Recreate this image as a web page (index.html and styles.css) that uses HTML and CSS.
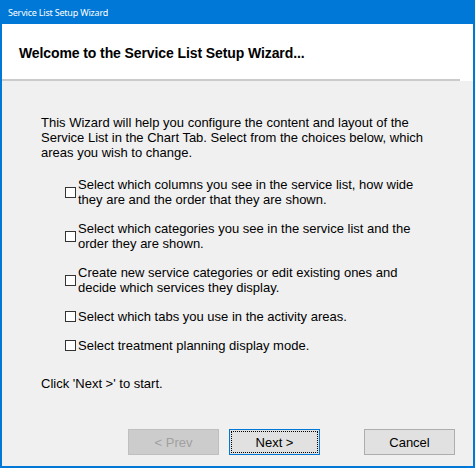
FILE: index.html
```html
<!DOCTYPE html>
<html>
<head>
<meta charset="utf-8">
<link rel="stylesheet" href="styles.css">
</head>
<body>
<div class="window">
  <div class="titlebar">Service List Setup Wizard</div>
  <div class="header">
    <h1 class="heading">Welcome to the Service List Setup Wizard...</h1>
  </div>
  <div class="separator"></div>
  <div class="content">
    <p class="intro">This Wizard will help you configure the content and layout of the<br>Service List in the Chart Tab. Select from the choices below, which<br>areas you wish to change.</p>
    <ul class="options">
      <li class="option"><span class="check"></span><span class="label">Select which columns you see in the service list, how wide<br>they are and the order that they are shown.</span></li>
      <li class="option"><span class="check"></span><span class="label">Select which categories you see in the service list and the<br>order they are shown.</span></li>
      <li class="option"><span class="check"></span><span class="label">Create new service categories or edit existing ones and<br>decide which services they display.</span></li>
      <li class="option"><span class="check"></span><span class="label">Select which tabs you use in the activity areas.</span></li>
      <li class="option"><span class="check"></span><span class="label">Select treatment planning display mode.</span></li>
    </ul>
    <p class="hint">Click 'Next &gt;' to start.</p>
    <div class="buttons">
      <button class="btn btn-disabled" disabled>&lt; Prev</button>
      <button class="btn btn-default">Next &gt;</button>
      <button class="btn btn-cancel">Cancel</button>
    </div>
  </div>
</div>
</body>
</html>
```

FILE: styles.css
```css
html, body {
  margin: 0;
  padding: 0;
}
body {
  width: 475px;
  height: 468px;
  overflow: hidden;
  font-family: "Liberation Sans", Arial, sans-serif;
}
.window {
  box-sizing: border-box;
  width: 475px;
  height: 468px;
  border: 2px solid #0078d7;
  border-top: 0;
  display: flex;
  flex-direction: column;
  background: #f0f0f0;
}
.titlebar {
  height: 24px;
  line-height: 25px;
  background: #0078d7;
  color: #ffffff;
  font-family: "Noto Sans", "Open Sans", sans-serif;
  font-size: 9px;
  letter-spacing: -0.2px;
  margin: 0 -2px 0 -2px;
  padding-left: 8px;
}
.header {
  box-sizing: border-box;
  height: 55px;
  background: #ffffff;
  padding: 21px 0 0 17px;
}
.heading {
  margin: 0;
  font-size: 14px;
  line-height: 16px;
  font-weight: bold;
  letter-spacing: -0.1px;
  color: #000;
}
.separator {
  height: 2px;
  background: linear-gradient(to right, #cbcbcb 0, #cbcbcb 458px, #ffffff 458px);
}
.content {
  flex: 1;
  display: flex;
  flex-direction: column;
  padding: 34px 0 11px 39px;
  font-size: 13px;
  line-height: 15px;
  color: #000;
}
.intro {
  margin: 0;
  white-space: nowrap;
}
.options {
  list-style: none;
  margin: 17px 0 0 24px;
  padding: 0;
  display: flex;
  flex-direction: column;
  gap: 14px;
}
.option {
  display: flex;
  align-items: center;
  white-space: nowrap;
}
.check {
  box-sizing: border-box;
  width: 11px;
  height: 11px;
  border: 1px solid #333333;
  background: #ffffff;
  margin-right: 2px;
  flex: none;
}
.hint {
  margin: 23px 0 0 0;
}
.buttons {
  margin-top: auto;
  display: flex;
  justify-content: flex-end;
  padding-right: 18px;
  gap: 10px;
}
.btn {
  box-sizing: border-box;
  width: 91px;
  height: 26px;
  padding: 0;
  font-family: "Liberation Sans", Arial, sans-serif;
  font-size: 13px;
  color: #000;
  background: #e1e1e1;
  border: 1px solid #adadad;
  position: relative;
}
.btn-disabled {
  background: #cccccc;
  border-color: #bfbfbf;
  color: #a0a0a0;
}
.btn-default {
  border-color: #0078d7;
}
.btn-default::after {
  content: "";
  position: absolute;
  inset: 1px;
  outline: 1px dotted #000;
  outline-offset: -1px;
}
.btn-cancel {
  margin-left: 34px;
}
```
